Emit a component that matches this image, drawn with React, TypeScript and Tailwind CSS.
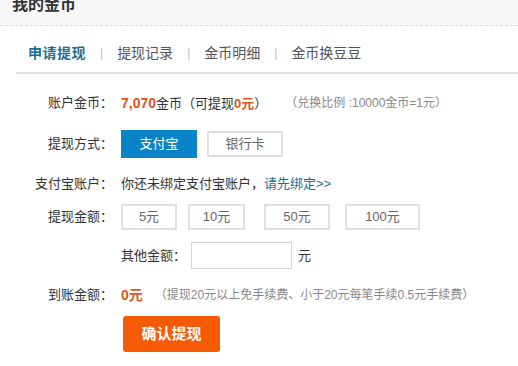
import React from "react";

const font = { fontFamily: '"Liberation Sans", "Noto Sans CJK SC", sans-serif' };

function Row({ label, children, className = "" }: { label?: string; children: React.ReactNode; className?: string }) {
  return (
    <div className={"flex items-center " + className}>
      <div className="w-[113px] shrink-0 text-right text-[13px] text-[#333] whitespace-nowrap">{label}</div>
      <div className="ml-[8px] flex items-center">{children}</div>
    </div>
  );
}

export default function App() {
  return (
    <div className="w-[518px] h-[366px] bg-white overflow-hidden" style={font}>
      <div className="h-[26px] bg-[#f7f7f7] border-b border-dashed border-[#dcdcdc] pl-[12px] overflow-hidden">
        <div className="text-[16px] leading-[16px] font-bold text-[#333] -mt-[3px]">我的金币</div>
      </div>
      <div className="ml-[16px] h-[48px] border-b-2 border-[#e4e4e4] pl-[12px] pt-[17px] flex items-start text-[14px] leading-[20px]">
        <span className="font-bold text-[#1d6d93] tracking-[0.5px]">申请提现</span>
        <span className="mx-[14px] text-[#bbb] text-[12px]">|</span>
        <span className="text-[#555]">提现记录</span>
        <span className="mx-[14px] text-[#bbb] text-[12px]">|</span>
        <span className="text-[#555]">金币明细</span>
        <span className="mx-[14px] text-[#bbb] text-[12px]">|</span>
        <span className="text-[#555]">金币换豆豆</span>
      </div>

      <Row label="账户金币：" className="mt-[19px] h-[20px]">
        <span className="text-[13px] text-[#333] whitespace-nowrap">
          <b className="text-[#e0561c] text-[14px]">7,070</b>金币（可提现<b className="text-[#e0561c]">0元</b>）
        </span>
        <span className="ml-[18px] text-[12px] text-[#888] whitespace-nowrap">（兑换比例 :10000金币=1元）</span>
      </Row>

      <Row label="提现方式：" className="mt-[17px] h-[28px]">
        <div className="w-[76px] h-[28px] bg-[#0a84c6] text-white text-[13px] flex items-center justify-center">支付宝</div>
        <div className="ml-[10px] w-[76px] h-[26px] border-2 border-[#e0e0e0] text-[#666] text-[13px] flex items-center justify-center">银行卡</div>
      </Row>

      <Row label="支付宝账户：" className="mt-[16px] h-[20px]">
        <span className="text-[13px] text-[#333] whitespace-nowrap">
          你还未绑定支付宝账户，<span className="text-[#1d6d93]">请先绑定&gt;&gt;</span>
        </span>
      </Row>

      <Row label="提现金额：" className="mt-[10px] h-[26px]">
        <div className="w-[56px] h-[26px] border-2 border-[#e0e0e0] text-[#666] text-[13px] flex items-center justify-center">5元</div>
        <div className="ml-[11px] w-[57px] h-[26px] border-2 border-[#e0e0e0] text-[#666] text-[13px] flex items-center justify-center">10元</div>
        <div className="ml-[19px] w-[66px] h-[26px] border-2 border-[#e0e0e0] text-[#666] text-[13px] flex items-center justify-center">50元</div>
        <div className="ml-[15px] w-[75px] h-[26px] border-2 border-[#e0e0e0] text-[#666] text-[13px] flex items-center justify-center">100元</div>
      </Row>

      <Row className="mt-[12px] h-[27px]">
        <span className="text-[13px] text-[#333] whitespace-nowrap">其他金额：</span>
        <div className="ml-[5px] w-[101px] h-[27px] border border-[#d4d4d4]"></div>
        <span className="ml-[6px] text-[13px] text-[#333]">元</span>
      </Row>

      <Row label="到账金额：" className="mt-[16px] h-[20px]">
        <b className="text-[#e0561c] text-[14px]">0元</b>
        <span className="ml-[12px] text-[12px] text-[#888] whitespace-nowrap">（提现20元以上免手续费、小于20元每笔手续0.5元手续费）</span>
      </Row>

      <div className="mt-[11px] ml-[123px] w-[97px] h-[36px] rounded-[3px] bg-[#f65a05] text-white text-[15px] font-bold flex items-center justify-center">确认提现</div>
    </div>
  );
}
